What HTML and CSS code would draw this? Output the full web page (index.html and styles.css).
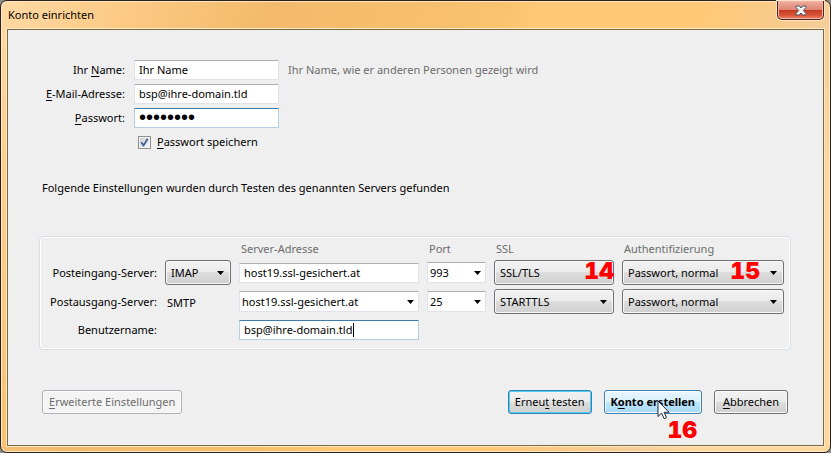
FILE: index.html
```html
<!DOCTYPE html>
<html lang="de">
<head>
    <title>Konto einrichten</title>
    <meta charset="utf-8" />
    <link rel="stylesheet" href="styles.css">
</head>
<body>
    <div class="window">
        <header class="titlebar">
            <h1>Konto einrichten</h1>
            <button class="close" type="button" aria-label="Schließen">
                <svg width="12" height="11" viewBox="0 0 12 11">
                    <path d="M1 1h3.3L6 3l1.7-2H11v1.5L8.3 5.5 11 8.5V10H7.7L6 8l-1.7 2H1V8.5l2.7-3L1 2.5z" fill="#f4f4f4" stroke="#4b5063" stroke-width="1" />
                </svg>
            </button>
        </header>
        <form class="client">
            <div class="account">
                <label for="name">Ihr <u>N</u>ame:</label>
                <input class="text" type="text" id="name" value="Ihr Name">
                <span class="hint">Ihr Name, wie er anderen Personen gezeigt wird</span>

                <label for="mail"><u>E</u>-Mail-Adresse:</label>
                <input class="text" type="text" id="mail" value="bsp@ihre-domain.tld">

                <label for="pass"><u>P</u>asswort:</label>
                <input class="text focus" type="password" id="pass" value="12345678">

                <div class="remember">
                    <input type="checkbox" id="save" checked>
                    <label for="save"><u>P</u>asswort speichern</label>
                </div>
            </div>

            <p class="status">Folgende Einstellungen wurden durch Testen des genannten Servers gefunden</p>

            <div class="servers">
                <span class="head address">Server-Adresse</span>
                <span class="head">Port</span>
                <span class="head">SSL</span>
                <span class="head">Authentifizierung</span>

                <label for="in-host">Posteingang-Server:</label>
                <select class="menu" aria-label="Protokoll"><option>IMAP</option></select>
                <input class="text" type="text" id="in-host" value="host19.ssl-gesichert.at">
                <select class="combo" aria-label="Port Posteingang"><option>993</option></select>
                <div class="marked">
                    <select class="menu plain" aria-label="SSL Posteingang"><option>SSL/TLS</option></select>
                    <span class="mark mark-ssl">14</span>
                </div>
                <div class="marked">
                    <select class="menu" aria-label="Authentifizierung Posteingang"><option>Passwort, normal</option></select>
                    <span class="mark mark-auth">15</span>
                </div>

                <label for="out-host">Postausgang-Server:</label>
                <span class="smtp">SMTP</span>
                <select class="combo" id="out-host"><option>host19.ssl-gesichert.at</option></select>
                <select class="combo" aria-label="Port Postausgang"><option>25</option></select>
                <select class="menu" aria-label="SSL Postausgang"><option>STARTTLS</option></select>
                <select class="menu" aria-label="Authentifizierung Postausgang"><option>Passwort, normal</option></select>

                <label for="user">Benutzername:</label>
                <div class="marked user">
                    <input class="text focus" type="text" id="user" value="bsp@ihre-domain.tld">
                    <span class="caret"></span>
                </div>
            </div>

            <footer class="buttons">
                <button class="button advanced" type="button" disabled><u>E</u>rweiterte Einstellungen</button>
                <button class="button default" type="button">Erneu<u>t</u> testen</button>
                <div class="marked">
                    <button class="button hot" type="button">K<u>o</u>nto erstellen</button>
                    <svg class="pointer" width="13" height="20" viewBox="0 0 13 20">
                        <path d="M1 1v15.5l3.6-3.4 2.5 5.6 2.4-1.1-2.4-5.3h5z" fill="#fff" stroke="#222838" stroke-width="1" />
                    </svg>
                    <span class="mark mark-create">16</span>
                </div>
                <button class="button" type="button"><u>A</u>bbrechen</button>
            </footer>
        </form>
    </div>
</body>
</html>
```
FILE: styles.css
```css
* {
    box-sizing: border-box;
}

body {
    margin: 0;
    background-color: #8a8a8a;
    color: #000;
    font-family: "Noto Sans", "Open Sans", sans-serif;
    font-size: 11px;
    line-height: 16px;
}

input, select, button {
    margin: 0;
    color: inherit;
    font: inherit;
}

u {
    text-underline-offset: 2px;
}

.window {
    display: flex;
    flex-direction: column;
    min-height: 100vh;
    padding: 0 6px 6px;
    border: 1px solid #2c2118;
    border-radius: 7px;
    background: linear-gradient(115deg, #ffd9a4 0, #fccb86 110px, #f2ba6a 250px, #f9c26f 460px, #ffc876 490px, #ffc876 640px, #f4cd99 760px, #ffd79c 820px);
    box-shadow: inset 0 0 0 1px #ffe8c8;
}

/* title bar */
.titlebar {
    display: flex;
    justify-content: space-between;
    align-items: flex-start;
    height: 28px;
    padding-left: 1px;
}

.titlebar h1 {
    margin: 0;
    padding-top: 6px;
    font-size: 11px;
    font-weight: normal;
}

.close {
    display: flex;
    justify-content: center;
    align-items: center;
    width: 47px;
    height: 19px;
    padding: 0;
    border: 1px solid #50201c;
    border-top: 0;
    border-radius: 0 0 5px 5px;
    background: linear-gradient(#efb0a0, #df8572 48%, #c23a20 50%, #d8553a 80%, #ee8a68);
    box-shadow: 0 0 0 1px #ffe3c4, inset 0 0 0 1px #f3b4a4;
}

/* dialog content */
.client {
    flex: 1;
    display: flex;
    flex-direction: column;
    padding: 30px 32px 31px 31px;
    border: 1px solid #7a6a3c;
    outline: 1px solid #ffe8c8;
    background-color: #efefef;
}

.account {
    display: grid;
    grid-template-columns: 86px 145px 1fr;
    column-gap: 9px;
    row-gap: 4px;
    align-items: center;
}

.account > label, .servers label {
    grid-column: 1;
    text-align: right;
    white-space: nowrap;
}

.hint, .head {
    color: #6d6d6d;
}

.text {
    width: 100%;
    height: 20px;
    padding: 0 4px 1px;
    border: 1px solid #e2e3ea;
    border-top-color: #abadb3;
    border-radius: 1px;
    background-color: #fff;
    outline: 0;
}

.focus {
    border-color: #b5cfe7;
    border-top-color: #3d7bad;
}

.text[type="password"] {
    font-family: "Liberation Sans", sans-serif;
    font-size: 20px;
}

.remember {
    grid-column: 2 / 4;
    display: flex;
    align-items: center;
    gap: 6px;
    padding: 2px 4px;
}

.remember input {
    appearance: none;
    width: 13px;
    height: 13px;
    border: 1px solid #8e8f8f;
    background: url("data:image/svg+xml,%3Csvg xmlns='http://www.w3.org/2000/svg' viewBox='0 0 11 11'%3E%3Cpath d='M2.2 5.2l2.3 3.2L8.7 1.8' fill='none' stroke='%234a5f97' stroke-width='1.9'/%3E%3C/svg%3E"), linear-gradient(135deg, #cbcfd5, #f6f6f6);
    box-shadow: inset 0 0 0 1px #f4f4f4;
}

.status {
    margin: 28px 0 40px 3px;
}

/* found servers */
.servers {
    display: grid;
    grid-template-columns: 111px 66px 180px 59px 120px 1fr;
    grid-template-rows: 15px 25px 25px 24px;
    column-gap: 8px;
    row-gap: 4px;
    align-items: center;
    padding: 4px 6px 7px;
    border: 1px solid #d5dfe5;
    border-radius: 4px;
    box-shadow: inset 0 0 0 1px #fff;
}

.address {
    grid-column: 3;
}

.head {
    padding-left: 2px;
}

.smtp {
    padding: 3px 0 0 2px;
}

.menu, .combo {
    appearance: none;
    width: 100%;
    padding: 0 18px 0 5px;
    background: url("data:image/svg+xml,%3Csvg xmlns='http://www.w3.org/2000/svg' width='7' height='4'%3E%3Cpath d='M0 0h7L3.5 4z'/%3E%3C/svg%3E") no-repeat right 6px center, linear-gradient(#f2f2f2, #ebebeb 48%, #dddddd 50%, #cfcfcf);
}

.menu {
    height: 25px;
    border: 1px solid #707070;
    border-radius: 3px;
    box-shadow: inset 0 0 0 1px #f8f8f8;
}

.plain {
    background: linear-gradient(#f2f2f2, #ebebeb 48%, #dddddd 50%, #cfcfcf);
}

.combo {
    height: 21px;
    padding-left: 2px;
    border: 1px solid #e2e3ea;
    border-top-color: #abadb3;
    border-radius: 1px;
    background-color: #fff;
    background-image: url("data:image/svg+xml,%3Csvg xmlns='http://www.w3.org/2000/svg' width='7' height='4'%3E%3Cpath d='M0 0h7L3.5 4z'/%3E%3C/svg%3E");
    background-position: right 4px center;
}

.marked {
    position: relative;
}

.user {
    grid-column: 3;
}

.caret {
    position: absolute;
    top: 3px;
    left: 114px;
    width: 1px;
    height: 14px;
    background-color: #000;
}

/* step numbers */
.mark {
    position: absolute;
    color: #f00;
    font-family: Inter, sans-serif;
    font-size: 23px;
    font-weight: 900;
    font-variant-numeric: tabular-nums;
    line-height: 24px;
}

.mark-ssl {
    top: -1px;
    right: 0;
}

.mark-auth {
    top: -1px;
    right: 24px;
}

.mark-create {
    top: 28px;
    left: 64px;
}

/* bottom buttons */
.buttons {
    display: flex;
    gap: 12px;
    margin-top: auto;
    padding: 0 3px;
}

.button {
    min-width: 74px;
    height: 24px;
    padding: 0 6px;
    border: 1px solid #707070;
    border-radius: 3px;
    background: linear-gradient(#f2f2f2, #ebebeb 48%, #dddddd 50%, #cfcfcf);
    box-shadow: inset 0 0 0 1px #fbfbfb;
    white-space: nowrap;
}

.advanced {
    margin-right: auto;
    border-color: #adb2b5;
    background: #f4f4f4;
    color: #6d6d6d;
}

.default {
    border-color: #3c7fb1;
    box-shadow: inset 0 0 0 1px #48d0f5;
}

.hot {
    border-color: #3c7fb1;
    background: linear-gradient(#eaf6fd, #d9f0fc 48%, #bee6fd 50%, #a7d9f5);
    font-weight: bold;
}

.pointer {
    position: absolute;
    top: 10px;
    left: 53px;
}
```
